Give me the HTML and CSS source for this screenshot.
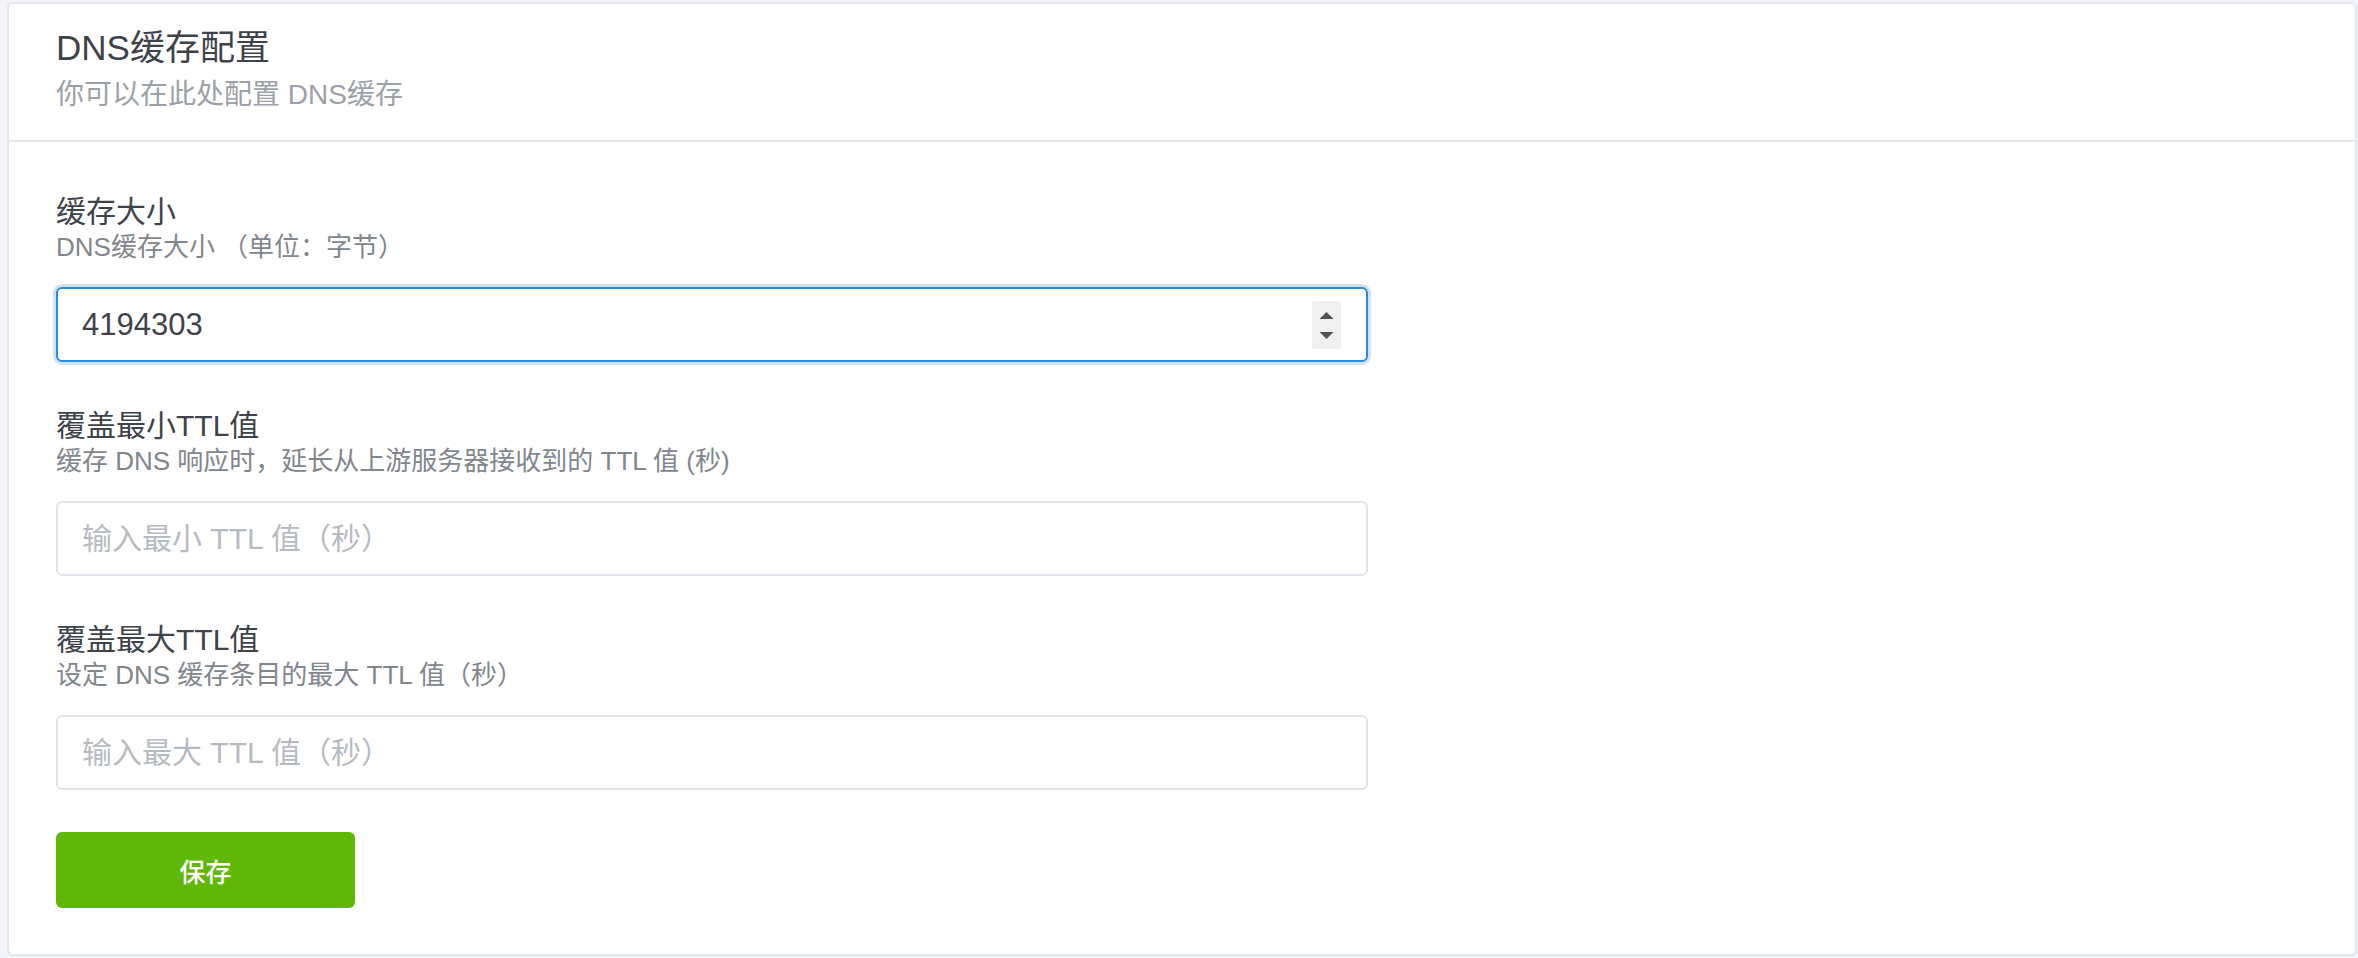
FILE: index.html
```html
<!DOCTYPE html>
<html lang="zh-CN">
<head>
<meta charset="utf-8">
<title>DNS缓存配置</title>
<link rel="stylesheet" href="styles.css">
</head>
<body>
<div class="card">
  <div class="card-header">
    <h1 class="card-title">DNS缓存配置</h1>
    <p class="card-subtitle">你可以在此处配置 DNS缓存</p>
  </div>
  <div class="card-body">
    <div class="form-group">
      <div class="form-label">缓存大小</div>
      <div class="form-desc">DNS缓存大小 （单位：字节）</div>
      <div class="field field-focus">
        <input class="field-input field-value" type="text" value="4194303">
        <span class="spinner">
          <svg width="29" height="48" viewBox="0 0 29 48">
            <polygon points="7.5,18 21.5,18 14.5,11" fill="#505356"/>
            <polygon points="7.5,31 21.5,31 14.5,38" fill="#505356"/>
          </svg>
        </span>
      </div>
    </div>
    <div class="form-group">
      <div class="form-label">覆盖最小TTL值</div>
      <div class="form-desc">缓存 DNS 响应时，延长从上游服务器接收到的 TTL 值 (秒)</div>
      <div class="field">
        <input class="field-input" type="text" placeholder="输入最小 TTL 值（秒）">
      </div>
    </div>
    <div class="form-group form-group-last">
      <div class="form-label">覆盖最大TTL值</div>
      <div class="form-desc">设定 DNS 缓存条目的最大 TTL 值（秒）</div>
      <div class="field">
        <input class="field-input" type="text" placeholder="输入最大 TTL 值（秒）">
      </div>
    </div>
    <button class="btn-save" type="button">保存</button>
  </div>
</div>
</body>
</html>
```

FILE: styles.css
```css
* {
  box-sizing: border-box;
}

html, body {
  margin: 0;
  height: 100%;
}

body {
  background: #f3f4f7;
  padding: 2px 1px 1px 7px;
  font-family: "Liberation Sans", "Noto Sans CJK SC", sans-serif;
  color: #3e434a;
}

.card {
  background: #ffffff;
  border: 2px solid #e3e6ec;
  border-radius: 6px;
}

.card-header {
  padding: 23px 47px 28px;
  border-bottom: 2px solid #e3e6ec;
}

.card-title {
  margin: 0;
  font-size: 35px;
  line-height: 42px;
  font-weight: 400;
  color: #3e434a;
}

.card-subtitle {
  margin: 9px 0 0;
  font-size: 28px;
  line-height: 34px;
  color: #9ca1a9;
}

.card-body {
  padding: 52px 47px 46px;
}

.form-group {
  margin-bottom: 46px;
}

.form-group-last {
  margin-bottom: 42px;
}

.form-label {
  font-size: 30px;
  line-height: 36px;
  color: #3e434a;
}

.form-desc {
  font-size: 26px;
  line-height: 34px;
  color: #81868d;
}

.field {
  margin-top: 23px;
  max-width: 1312px;
  height: 75px;
  border: 2px solid #e1e4ea;
  border-radius: 6px;
  background: #ffffff;
  display: flex;
  align-items: center;
  padding: 0 25px 0 24px;
}

.field-focus {
  border-color: #2d8bdb;
  box-shadow: 0 0 0 3px #d0e1f5;
}

.field-input {
  flex: 1;
  min-width: 0;
  border: 0;
  outline: 0;
  padding: 0;
  margin: 0;
  background: transparent;
  font-family: "Liberation Sans", "Noto Sans CJK SC", sans-serif;
  font-size: 30px;
  line-height: 40px;
  color: #3e434a;
}

.field-value {
  font-size: 31px;
}

.field-input::placeholder {
  color: #b6bbc3;
  opacity: 1;
}

.spinner {
  width: 29px;
  height: 48px;
  background: #f0f0f0;
  border-radius: 3px;
  display: flex;
}

.btn-save {
  display: block;
  width: 299px;
  height: 76px;
  border: 0;
  border-radius: 6px;
  background: #5fb805;
  color: #ffffff;
  font-family: "Noto Sans CJK SC", sans-serif;
  font-size: 26px;
  font-weight: 500;
  padding: 0;
  cursor: pointer;
}
```
